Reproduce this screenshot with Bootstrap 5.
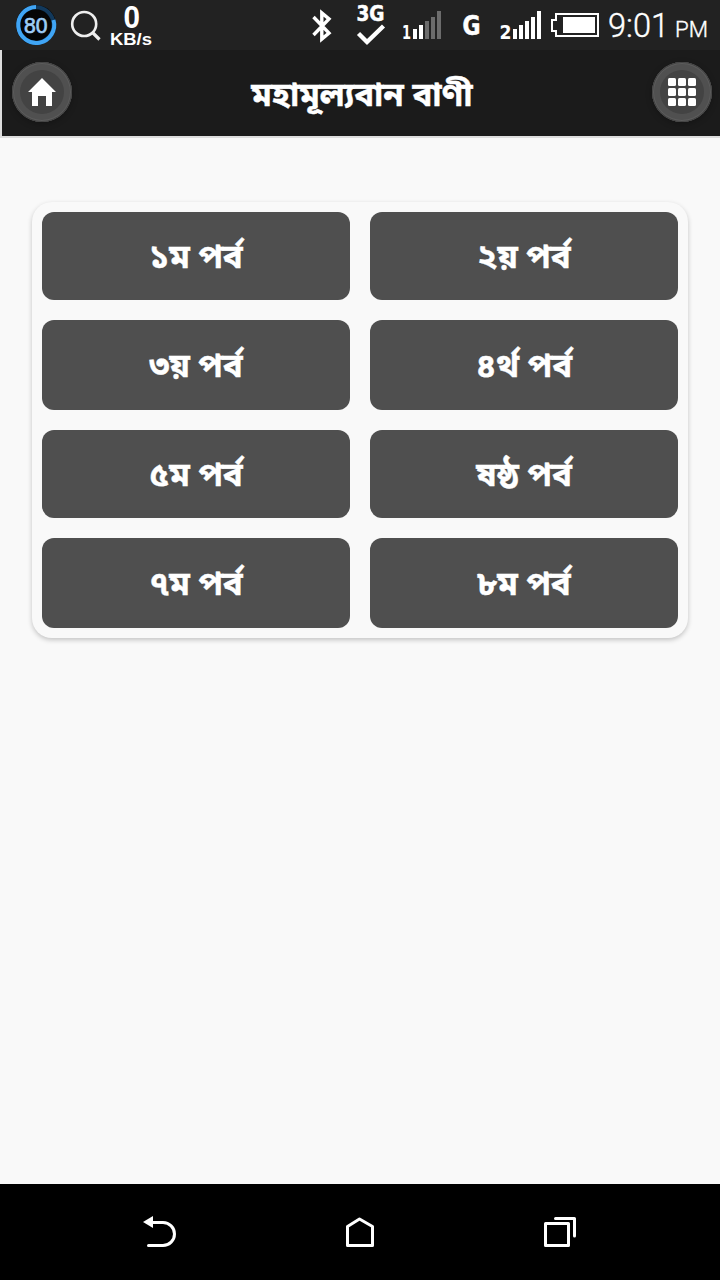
<!DOCTYPE html>
<html lang="bn">
<head>
<meta charset="utf-8">
<meta name="viewport" content="width=device-width, initial-scale=1">
<title>মহামূল্যবান বাণী</title>
<link href="https://cdn.jsdelivr.net/npm/bootstrap@5.3.0/dist/css/bootstrap.min.css" rel="stylesheet">
<style>
body{background:#f9f9f9;font-family:"Noto Sans Bengali","Noto Sans",sans-serif;overflow:hidden}
svg{display:block;flex:none}
.status-strip{height:50px;background:#222;color:#fff}
.app-head{height:88px;background:#1b1b1b;border-left:2px solid #ddd;border-bottom:2px solid #ddd;padding:0 8px 2px 10px}
.app-title{font-size:33px;font-weight:700;line-height:48px;color:#fff;padding-top:12px;-webkit-text-stroke:.4px #fff}
.round-btn{width:60px;height:60px;padding:0;border:0;border-radius:50%;background:#505050;box-shadow:inset 0 0 0 1px #434343,inset 0 0 0 2px #5c5c5c,0 2px 6px rgba(0,0,0,.25)}
.round-core{width:44px;height:44px;border-radius:50%;background:#434343}
.panel{margin:64px 32px 0;height:436px;padding:10px;border-radius:20px;background:#f9f9f9;box-shadow:0 2px 5px rgba(0,0,0,.22);display:grid;grid-template-columns:308px 308px;grid-template-rows:88px 90px 88px 90px;gap:20px}
.part-btn{background:#4f4f4f;color:#fff;font-size:33px;font-weight:700;line-height:48px;border:0;border-radius:12px;padding:8px 0 0;-webkit-text-stroke:.4px #fff}
.part-btn:hover{background:#5a5a5a;color:#fff}
.nav-strip{height:96px;background:#000}
.lat{font-family:"Liberation Sans",sans-serif;font-weight:700}
.net{font-family:"DejaVu Sans",sans-serif;font-weight:700}
.clock{font-family:Roboto,sans-serif;font-weight:300;stroke:#fff;stroke-width:.4}
</style>
</head>
<body class="vh-100 d-flex flex-column">
<div class="status-strip d-flex flex-shrink-0">
  <svg width="160" height="50" viewBox="0 0 160 50">
    <circle cx="36" cy="25" r="20" fill="#050505"/>
    <circle cx="36" cy="25" r="17.7" fill="none" stroke="#12395c" stroke-width="4"/>
    <path d="M53.5 20A18 18 0 1 1 36 7" fill="none" stroke="#40a5f5" stroke-width="4"/>
    <text x="24" y="32.500" font-family="Liberation Sans, sans-serif" font-size="22" textLength="23.500" lengthAdjust="spacingAndGlyphs" fill="#9dccf5" stroke="#9dccf5" stroke-width=".7">80</text>
    <g fill="none" stroke="#eee" stroke-width="2.6"><circle cx="84.2" cy="24" r="12"/><path d="M92.5 32.500l7 7" stroke-width="3.2"/></g>
    <text class="lat" x="123.500" y="28" font-size="31" textLength="16.500" lengthAdjust="spacingAndGlyphs" fill="#fff">0</text>
    <text class="lat" x="110" y="45" font-size="17" textLength="42" lengthAdjust="spacingAndGlyphs" fill="#fff">KB/s</text>
  </svg>
  <svg class="ms-auto" width="410" height="50" viewBox="310 0 410 50" fill="#fff">
    <path d="M313.500 17L329 33 321.800 39V13L329 19 313.500 35" fill="none" stroke="#fff" stroke-width="3.400"/>
    <text class="net" x="356.500" y="21" font-size="21" textLength="28" lengthAdjust="spacingAndGlyphs" stroke="#fff" stroke-width=".6">3G</text>
    <path d="M358.500 33.500l8.500 8.500L383.500 26" fill="none" stroke="#fff" stroke-width="4.400"/>
    <text class="net" x="402" y="39" font-size="20" textLength="9" lengthAdjust="spacingAndGlyphs">1</text>
    <path d="M413 29h4v10h-4zM419 25h4v14h-4z"/>
    <path d="M425 21h4v18h-4zM431 17h4v22h-4zM437 11h4v28h-4z" fill="#6c6c6c"/>
    <text class="net" x="462.500" y="35" font-size="26" textLength="18" lengthAdjust="spacingAndGlyphs" stroke="#fff" stroke-width=".6">G</text>
    <text class="net" x="499.500" y="39" font-size="20" textLength="12" lengthAdjust="spacingAndGlyphs">2</text>
    <path d="M513 29h4v10h-4zM519 25h4v14h-4zM525 21h4v18h-4zM531 17h4v22h-4zM537 11h4v28h-4z"/>
    <path d="M556 14h42v22h-42v-5h-4V20h4z" fill="none" stroke="#fff" stroke-width="2"/>
    <path d="M563 17h32v16h-32z"/>
    <text class="clock" x="608" y="37" font-size="32.500" textLength="61" lengthAdjust="spacingAndGlyphs">9:01</text>
    <text class="clock" x="675" y="36.500" font-size="22" textLength="33" lengthAdjust="spacingAndGlyphs">PM</text>
  </svg>
</div>
<header class="app-head d-flex flex-shrink-0 align-items-center justify-content-between">
  <button class="round-btn btn d-flex align-items-center justify-content-center" aria-label="Home"><span class="round-core d-flex align-items-center justify-content-center">
    <svg width="28" height="28" viewBox="0 0 28 28"><path d="M14 0l14 14h-4v14h-6V18h-8v10H4V14H0z" fill="#fff"/></svg></span></button>
  <h1 class="app-title m-0">মহামূল্যবান বাণী</h1>
  <button class="round-btn btn d-flex align-items-center justify-content-center" aria-label="Menu"><span class="round-core d-flex align-items-center justify-content-center">
    <svg width="28" height="28" viewBox="0 0 28 28" fill="#fff"><rect width="8" height="8" rx="1.500"/><rect x="10" width="8" height="8" rx="1.500"/><rect x="20" width="8" height="8" rx="1.500"/><rect y="10" width="8" height="8" rx="1.500"/><rect x="10" y="10" width="8" height="8" rx="1.500"/><rect x="20" y="10" width="8" height="8" rx="1.500"/><rect y="20" width="8" height="8" rx="1.500"/><rect x="10" y="20" width="8" height="8" rx="1.500"/><rect x="20" y="20" width="8" height="8" rx="1.500"/></svg></span></button>
</header>
<main class="flex-grow-1">
  <div class="panel">
    <button class="btn part-btn">১ম পর্ব</button>
    <button class="btn part-btn">২য় পর্ব</button>
    <button class="btn part-btn">৩য় পর্ব</button>
    <button class="btn part-btn">৪র্থ পর্ব</button>
    <button class="btn part-btn">৫ম পর্ব</button>
    <button class="btn part-btn">ষষ্ঠ পর্ব</button>
    <button class="btn part-btn">৭ম পর্ব</button>
    <button class="btn part-btn">৮ম পর্ব</button>
  </div>
</main>
<nav class="nav-strip d-flex flex-shrink-0 justify-content-center align-items-center">
  <svg width="200" height="96" viewBox="60 0 200 96"><path d="M152 38.500h11a11.500 11.500 0 0 1 0 23h-14.500" fill="none" stroke="#fff" stroke-width="3" stroke-linecap="round"/><path d="M143 38l10-6v12z" fill="#fff"/></svg>
  <svg width="200" height="96" viewBox="260 0 200 96"><path d="M347.500 42.500L359.500 35l13 7.500v19h-25z" fill="none" stroke="#fff" stroke-width="3" stroke-linejoin="round"/></svg>
  <svg width="200" height="96" viewBox="460 0 200 96" fill="none" stroke="#fff" stroke-width="3" stroke-linejoin="round" stroke-linecap="round"><path d="M545.500 39.500h23v22h-23zM555.500 34.500h19v17.500"/></svg>
</nav>
<script src="https://cdn.jsdelivr.net/npm/bootstrap@5.3.0/dist/js/bootstrap.bundle.min.js"></script>
</body>
</html>
